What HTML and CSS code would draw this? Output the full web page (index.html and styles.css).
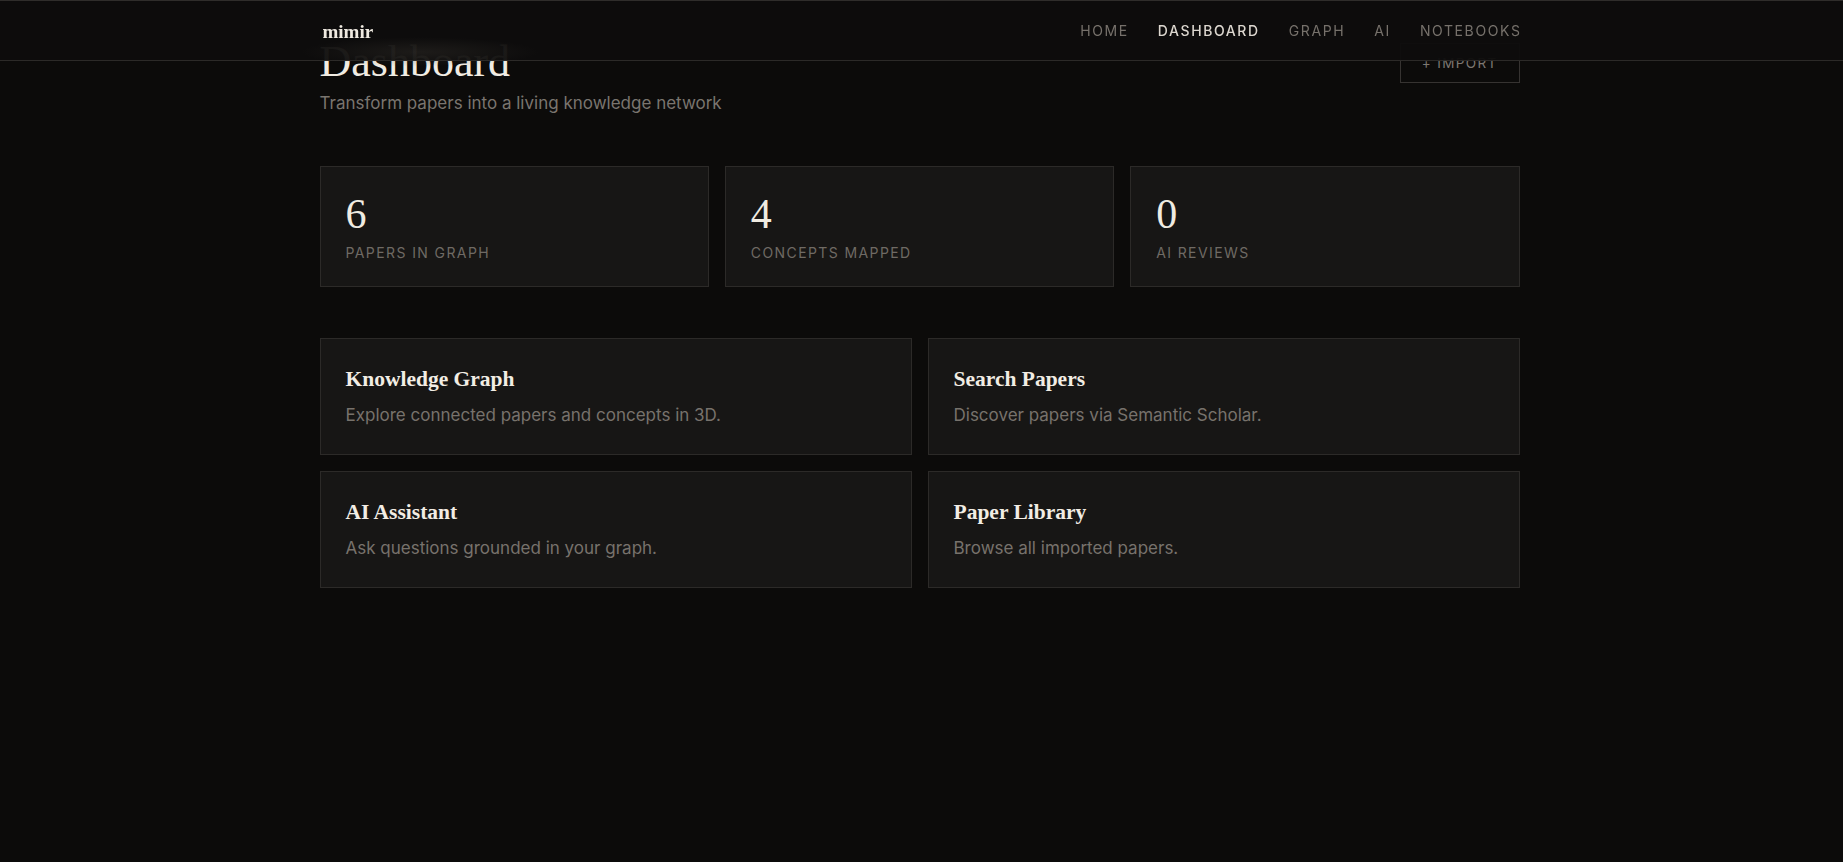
FILE: index.html
```html
<!DOCTYPE html>
<html lang="en">
<head>
<meta charset="utf-8">
<title>mimir — Dashboard</title>
<link rel="stylesheet" href="styles.css">
</head>
<body>
<header class="topbar">
  <div class="topbar-inner">
    <a class="logo" href="#">mimir</a>
    <nav class="nav">
      <a class="nav-link" href="#">HOME</a>
      <a class="nav-link active" href="#">DASHBOARD</a>
      <a class="nav-link" href="#">GRAPH</a>
      <a class="nav-link" href="#">AI</a>
      <a class="nav-link" href="#">NOTEBOOKS</a>
    </nav>
  </div>
</header>
<main class="page">
  <section class="page-head">
    <div class="head-text">
      <h1 class="title">Dashboard</h1>
      <p class="subtitle">Transform papers into a living knowledge network</p>
    </div>
    <button class="import-btn">+ IMPORT</button>
  </section>

  <section class="stats">
    <div class="stat-card">
      <div class="stat-num">6</div>
      <div class="stat-label">PAPERS IN GRAPH</div>
    </div>
    <div class="stat-card">
      <div class="stat-num">4</div>
      <div class="stat-label">CONCEPTS MAPPED</div>
    </div>
    <div class="stat-card">
      <div class="stat-num">0</div>
      <div class="stat-label">AI REVIEWS</div>
    </div>
  </section>

  <section class="actions">
    <a class="action-card" href="#">
      <h3 class="action-title">Knowledge Graph</h3>
      <p class="action-desc">Explore connected papers and concepts in 3D.</p>
    </a>
    <a class="action-card" href="#">
      <h3 class="action-title">Search Papers</h3>
      <p class="action-desc">Discover papers via Semantic Scholar.</p>
    </a>
    <a class="action-card" href="#">
      <h3 class="action-title">AI Assistant</h3>
      <p class="action-desc">Ask questions grounded in your graph.</p>
    </a>
    <a class="action-card" href="#">
      <h3 class="action-title">Paper Library</h3>
      <p class="action-desc">Browse all imported papers.</p>
    </a>
  </section>
</main>
</body>
</html>
```

FILE: styles.css
```css
* { box-sizing: border-box; }

html, body {
  margin: 0;
  padding: 0;
  background: #0c0b0a;
  color: #e8e3da;
  font-family: Inter, "Noto Sans", sans-serif;
  height: 100%;
}

body { padding-right: 4px; }

a { text-decoration: none; color: inherit; }

.topbar {
  position: fixed;
  top: 0;
  left: 0;
  right: 0;
  height: 61px;
  padding-right: 4px;
  background: rgba(14, 13, 12, 0.96);
  border-top: 1px solid #2f2d2b;
  border-bottom: 1px solid #2c2a28;
  z-index: 10;
}

.topbar::after {
  content: "";
  position: absolute;
  left: 300px;
  top: 36px;
  width: 240px;
  height: 30px;
  background: radial-gradient(ellipse at center, rgba(60, 56, 50, 0.35) 0%, rgba(60, 56, 50, 0) 70%);
  pointer-events: none;
}

.topbar-inner {
  max-width: 1200px;
  height: 100%;
  margin: 0 auto;
  display: flex;
  align-items: center;
  justify-content: space-between;
}

.logo {
  font-family: "Liberation Serif", "Times New Roman", serif;
  font-weight: 700;
  font-size: 19px;
  color: #efeae1;
  padding-left: 3px;
  margin-top: 2px;
}

.nav {
  display: flex;
  gap: 29px;
  margin-right: -2px;
}

.nav-link {
  font-size: 14px;
  letter-spacing: 0.115em;
  color: #76716b;
}

.nav-link.active {
  color: #dcd7cf;
  font-weight: 500;
}

.page {
  max-width: 1200px;
  margin: 0 auto;
  padding-top: 37px;
}

.page-head {
  display: flex;
  justify-content: space-between;
  align-items: flex-start;
}

.title {
  margin: 0;
  padding-top: 1px;
  font-family: "Liberation Serif", "Times New Roman", serif;
  font-weight: 400;
  font-size: 44px;
  line-height: 48px;
  color: #f1ece3;
}

.subtitle {
  margin: 5px 0 0;
  font-size: 17px;
  line-height: 25px;
  color: #7a756f;
}

.import-btn {
  margin-top: 6px;
  height: 40px;
  padding: 0 21px;
  background: transparent;
  border: 1px solid #363331;
  color: #7d7872;
  font-family: Inter, "Noto Sans", sans-serif;
  font-size: 13.5px;
  letter-spacing: 0.1em;
}

.stats {
  display: grid;
  grid-template-columns: repeat(3, 1fr);
  gap: 16px;
  margin-top: 50px;
}

.stat-card {
  background: #171615;
  border: 1px solid #2c2a28;
  padding: 26px 24px 23px 25px;
}

.stat-num {
  font-family: "Liberation Serif", "Times New Roman", serif;
  font-size: 42px;
  line-height: 42px;
  color: #f0ebe1;
}

.stat-label {
  margin-top: 7px;
  font-size: 14px;
  line-height: 21px;
  letter-spacing: 0.1em;
  color: #6f6a64;
}

.actions {
  display: grid;
  grid-template-columns: repeat(2, 1fr);
  gap: 16px;
  margin-top: 51px;
}

.action-card {
  display: block;
  background: #171615;
  border: 1px solid #2c2a28;
  padding: 27px 24px 26px 25px;
}

.action-title {
  margin: 0;
  font-family: "Liberation Serif", "Times New Roman", serif;
  font-weight: 700;
  font-size: 21.5px;
  line-height: 27px;
  color: #f2ede4;
}

.action-desc {
  margin: 10px 0 0;
  font-size: 17px;
  line-height: 25px;
  color: #77726c;
}
```
